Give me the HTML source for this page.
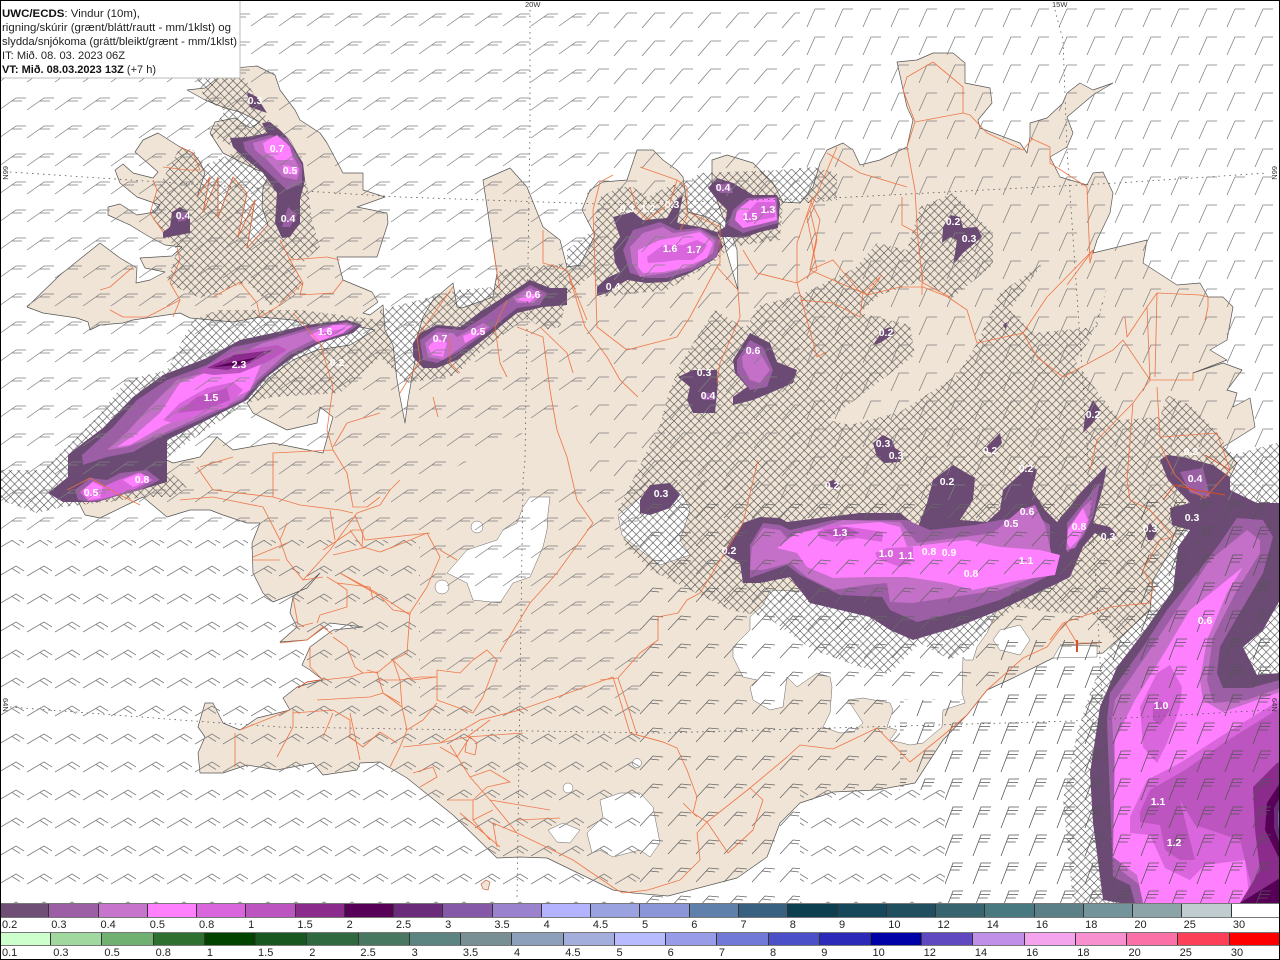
<!DOCTYPE html>
<html lang="is"><head><meta charset="utf-8"><title>UWC/ECDS</title>
<style>
html,body{margin:0;padding:0;background:#fff}
#w{position:relative;width:1280px;height:960px;overflow:hidden;background:#fff;font-family:"Liberation Sans",sans-serif}
svg{position:absolute;left:0;top:0}
.bar{position:absolute;left:0;width:1280px;display:flex;box-sizing:border-box;border-top:1px solid #777;border-bottom:1px solid #777}
.bar i{display:block;flex:1;border-right:1px solid #333;box-sizing:border-box}
.lab{position:absolute;left:0;width:1280px;display:flex;font-size:11px;line-height:14px;color:#222;background:#fff}
.lab b{display:block;flex:1;font-weight:400;padding-left:2px;box-sizing:border-box}
.edge{position:absolute;background:#000}
</style></head><body><div id="w">
<svg width="1280" height="903" viewBox="0 0 1280 903" xmlns="http://www.w3.org/2000/svg">
<defs>
<pattern id="h" width="8.4" height="8.4" patternUnits="userSpaceOnUse" x="2" y="1"><path d="M0 0L8.4 8.4M8.4 0L0 8.4M-1 7.4L1 9.4M7.4 -1L9.4 1" stroke="#3a3a3a" stroke-width=".55" fill="none"/></pattern>
<pattern id="b3" width="28" height="28" patternUnits="userSpaceOnUse" x="25" y="4"><path d="M2 22L19 10h10M15 13h10M-26 22L-9 10h10M-13 13h10" stroke="#808080" stroke-width=".75" fill="none"/></pattern>
<pattern id="b2" width="28" height="28" patternUnits="userSpaceOnUse" x="24" y="6"><path d="M2 22L15 7h10M-26 22L-13 7h10" stroke="#808080" stroke-width=".75" fill="none"/></pattern>
<pattern id="b1" width="28" height="28" patternUnits="userSpaceOnUse" x="21" y="1"><path d="M2 26L10 8h10" stroke="#808080" stroke-width=".75" fill="none"/></pattern>
<pattern id="bc" width="28" height="28" patternUnits="userSpaceOnUse" x="25" y="0"><path d="M2 16L19 6l8 5M15 8.500l8 5M-26 16L-9 6l8 5M-13 8.500l8 5" stroke="#808080" stroke-width=".75" fill="none"/></pattern>
<pattern id="b5" width="28" height="28" patternUnits="userSpaceOnUse" x="22" y="22"><path d="M2 20L15 6l10 1M12 9l9 1M-26 20L-13 6l10 1M-16 9l9 1" stroke="#666" stroke-width=".75" fill="none"/></pattern>
<pattern id="bs" width="28" height="28" patternUnits="userSpaceOnUse" x="19" y="20"><path d="M2 24L10 3h10M9 6.500h10M7.700 10h9" stroke="#555" stroke-width=".75" fill="none"/></pattern>
</defs>
<rect width="1280" height="903" fill="#fff"/>
<!-- land -->
<path fill="#f0e4d6" stroke="#555" stroke-width=".7" stroke-linejoin="round" d="M253 573L252 543L260 523L247 523L223 515L210 510L190 510L167 517L143 497L100 518L85 515L70 485L68 470L90 470L133 463L160 457L173 463L200 457L217 437L233 450L273 443L323 453L333 417L320 407L317 423L287 430L253 413L247 403L270 377L293 360L317 350L350 345L375 330L350 325L333 332L293 320L260 317L233 322L190 318L180 313L133 320L123 323L100 325L90 330L88 322L77 318L43 313L27 307L60 275L100 243L120 258L137 268L136 283L150 280L165 272L145 268L140 258L172 256L182 247L165 245L148 236L130 225L108 215L108 207L120 204L137 215L155 212L160 205L137 197L120 183L115 170L123 164L133 173L153 178L158 172L150 165L135 152L143 140L158 133L180 147L193 153L200 162L205 173L197 197L210 177L203 212L218 177L218 218L228 190L233 177L247 193L238 237L255 200L247 248L268 225L262 207L263 187L270 173L257 170L223 153L210 133L215 122L235 118L250 128L260 122L240 112L225 108L205 100L187 90L205 88L215 80L235 68L257 66L275 75L280 90L295 110L300 120L320 133L327 143L343 173L363 173L363 190L385 197L357 207L387 213L388 223L377 257L337 257L343 280L372 292L378 302L363 313L370 315L383 305L385 330L393 345L397 380L400 397L405 423L408 400L415 360L417 337L423 317L433 300L453 283L457 307L462 308L493 297L497 273L483 180L510 168L527 187L543 227L560 240L567 267L580 265L595 235L582 210L590 190L603 182L627 180L637 150L653 150L663 160L677 170L683 177L688 212L707 217L720 224L726 250L738 290L737 250L732 235L722 215L712 185L712 160L727 155L753 163L773 183L783 202L800 203L813 187L820 163L827 150L843 143L853 150L860 165L880 160L907 147L913 120L907 107L897 62L917 60L933 53L953 53L965 63L965 83L990 88L992 103L978 120L980 128L1020 143L1027 153L1030 137L1030 123L1047 118L1063 103L1067 93L1080 83L1093 90L1113 83L1093 95L1067 117L1073 133L1067 147L1050 157L1060 177L1087 185L1093 173L1103 172L1113 193L1110 213L1097 240L1093 253L1147 240L1143 263L1177 285L1200 283L1208 297L1223 297L1233 307L1227 340L1210 350L1227 360L1193 373L1223 363L1242 370L1227 390L1237 393L1233 407L1250 398L1255 427L1223 447L1237 463L1230 477L1203 500L1177 540L1153 580L1150 610L1103 653L1053 658L1013 678L987 690L967 715L943 740L915 783L877 790L833 792L800 803L780 823L767 857L737 878L668 896L633 893L613 890L547 858L520 857L497 858L453 815L407 778L380 762L360 763L357 770L323 775L313 763L277 770L247 765L223 773L200 773L198 753L205 737L198 727L205 703L213 703L223 723L240 730L257 718L290 710L283 698L297 687L323 680L310 670L302 665L310 647L333 630L363 627L330 623L307 640L280 642L297 627L290 613L293 597L320 573L307 588L273 602L263 593Z"/>
<path fill="#f0e4d6" stroke="#c0502a" stroke-width=".6" d="M481 884L486 880L490 882L488 890L483 889Z"/>
<!-- ice and lakes -->
<g fill="#fff" stroke="#666" stroke-width=".5">
<path d="M530 497L550 497L548 513L547 530L543 547L530 577L513 583L500 603L473 600L467 583L447 573L467 550L497 540L503 530L517 523L523 507Z"/>
<circle cx="477" cy="527" r="6"/><circle cx="442" cy="587" r="7"/><circle cx="637" cy="763" r="4.500"/><circle cx="568" cy="788" r="5"/>
<path d="M618 515L640 497L680 490L690 510L680 540L690 555L660 565L640 550L622 535Z"/>
<path d="M600 800L620 793L640 793L653 807L660 843L650 857L640 850L613 857L600 850L592 853L587 833L603 817Z"/>
<path d="M548 830L563 823L580 830L570 843L557 842Z"/>
<path d="M733 647L750 630L750 617L763 605L770 590L900 595L997 610L987 633L977 647L973 660L965 660L963 657L962 693L965 703L943 710L942 727L923 743L910 745L890 740L897 730L887 727L893 710L890 703L863 698L848 700L863 723L853 732L840 733L823 727L830 713L832 687L830 677L817 673L797 687L787 677L783 707L770 710L753 700L750 687L757 680L743 677L733 657Z"/>
<path d="M993 640L1000 630L1020 625L1030 640L1020 655L1000 650Z"/>
<path d="M1053 658L1060 646L1097 645L1097 657Z"/>
<path d="M270 125L290 140L303 165L300 172L285 155Z"/>
</g>
<!-- cross hatch -->
<g fill="url(#h)">
<path d="M197 78L245 78L265 115L300 160L308 190L312 220L320 247L303 262L290 258L303 285L290 300L270 305L247 282L200 298L167 283L177 250L150 215L157 190L180 147L193 150L205 165L240 150L210 135L225 110L205 100Z"/>
<path d="M0 470L43 470L97 417L127 380L167 370L193 320L217 310L300 310L380 320L380 357L340 393L273 397L247 403L187 443L160 463L187 487L173 497L147 497L63 507L37 513L0 500Z"/>
<path d="M380 310L458 290L493 287L500 270L567 263L567 250L593 230L600 197L620 187L633 187L647 197L667 187L690 180L700 173L780 170L813 167L837 173L837 200L813 203L783 203L780 240L730 247L717 260L667 290L600 297L593 273L567 297L560 327L543 330L527 317L487 347L467 363L457 375L407 383L380 357Z"/>
<path d="M618 510L640 465L660 425L668 395L680 365L695 340L715 310L745 328L760 305L800 295L855 268L877 243L907 250L920 207L953 193L993 233L993 265L950 300L925 280L880 295L860 313L910 325L915 355L855 400L828 420L850 425L900 412L957 375L977 343L1000 293L1043 263L1010 310L1033 333L1097 327L1107 287L1090 340L1075 360L1100 395L1120 420L1160 417L1167 395L1190 405L1215 430L1233 455L1280 442L1280 680L1135 680L1135 903L1073 903L1063 800L1077 733L1090 693L1103 660L1115 640L1095 615L1050 612L1017 607L993 623L973 647L950 660L920 643L890 673L860 667L813 650L767 617L730 610L680 585L650 570L625 545Z"/>
</g>
<!-- precipitation -->
<g stroke="none">
<!-- Breidafjordur -->
<path fill="#6b4a73" d="M68 455L83 443L103 428L133 397L163 375L207 358L240 340L273 333L307 325L347 320L362 325L353 333L320 343L293 357L267 377L247 400L207 420L167 440L167 470L167 482L140 490L120 495L97 502L63 502L48 493L68 477Z"/>
<path fill="#9c5ea4" d="M82 455L113 427L137 400L167 380L207 365L233 347L267 340L307 328L347 322L357 326L347 333L317 342L290 355L260 380L243 400L200 420L160 437L133 452L107 457L83 465Z"/>
<path fill="#c46fc8" d="M107 450L127 432L150 407L177 380L207 372L233 357L263 343L310 330L347 323L353 327L317 338L287 353L257 380L243 398L200 417L160 435L127 447Z"/>
<path fill="#ff80ff" d="M117 447L137 433L160 413L180 383L213 370L247 367L265 355L250 390L220 405L165 425L130 445Z"/>
<path fill="#d966dc" d="M163 420L180 403L207 388L233 382L243 390L227 407L200 415L173 423Z"/>
<path fill="#bc55bf" d="M177 413L197 397L227 388L230 400L203 410Z"/>
<path fill="#bc55bf" d="M197 372L233 352L277 345L287 350L267 362L240 373L213 375Z"/>
<path fill="#8b2c8c" d="M207 368L233 355L273 350L250 363L227 370Z"/>
<path fill="#570057" d="M213 367L233 362L258 357L240 365Z"/>
<path fill="#ff80ff" d="M310 335L333 325L353 325L343 333L317 342Z"/>
<path fill="#d966dc" d="M320 333L347 328L330 337Z"/>
<path fill="#9c5ea4" d="M75 490L90 478L107 480L120 473L147 470L160 480L140 490L113 497L93 502L78 500Z"/>
<path fill="#d966dc" d="M80 492L93 481L105 486L118 480L140 472L153 480L135 489L103 499L88 501Z"/>
<path fill="#ff80ff" d="M83 490L93 482L103 487L100 498L88 500Z"/>
<path fill="#ff80ff" d="M123 480L140 473L150 480L133 487Z"/>
<!-- NW fjords -->
<path fill="#6b4a73" d="M230 138L247 137L267 133L262 123L270 122L280 130L287 137L303 163L305 180L300 200L300 223L290 237L282 238L275 223L277 193L263 173L243 157L233 147Z"/>
<path fill="#9c5ea4" d="M243 142L270 135L287 138L302 165L302 183L287 190L273 177L257 162L245 150Z"/>
<path fill="#c46fc8" d="M253 143L273 137L287 143L300 170L297 180L283 177L267 160L255 150Z"/>
<path fill="#ff80ff" d="M263 143L277 135L290 147L293 160L277 160L265 152Z"/>
<path fill="#ff80ff" d="M283 165L298 168L297 175L285 173Z"/>
<path fill="#9c5ea4" d="M288 207L297 215L290 227L282 227Z"/>
<path fill="#6b4a73" d="M247 92L257 97L267 113L250 107Z"/>
<path fill="#6b4a73" d="M172 212L180 207L190 213L190 233L163 238L163 232L170 227Z"/>
<path fill="#9c5ea4" d="M177 213L187 212L186 220L178 222Z"/>
<!-- Huna -->
<path fill="#6b4a73" d="M413 343L420 333L437 325L460 327L480 312L510 293L530 280L550 288L567 288L567 305L543 307L517 313L487 337L457 360L437 368L423 368L413 357Z"/>
<path fill="#9c5ea4" d="M420 340L437 328L463 330L487 315L507 300L530 285L547 293L540 305L517 308L490 330L457 353L437 363L423 360Z"/>
<path fill="#c46fc8" d="M425 343L437 332L453 333L457 337L483 323L490 327L467 343L443 360L428 357Z"/>
<path fill="#c46fc8" d="M513 297L530 288L543 295L533 303L517 303Z"/>
<path fill="#ff80ff" d="M428 347L437 338L447 343L443 357L432 355Z"/>
<path fill="#ff80ff" d="M517 300L528 293L538 295L530 302Z"/>
<path fill="#ff80ff" d="M463 336L487 326L484 332L465 343Z"/>
<!-- Skagi -->
<path fill="#6b4a73" d="M597 287L607 278L620 272L615 263L613 247L620 237L613 217L633 212L643 220L667 218L677 200L683 195L677 223L700 227L717 232L723 247L713 260L690 273L667 282L647 283L627 280L607 293L597 296Z"/>
<path fill="#9c5ea4" d="M627 263L623 250L633 230L660 222L677 230L700 228L720 240L717 257L693 270L667 278L647 278L630 273Z"/>
<path fill="#c46fc8" d="M632 263L630 247L643 233L663 227L673 233L700 230L715 240L713 253L693 267L667 273L640 277Z"/>
<path fill="#ff80ff" d="M638 267L638 250L660 240L677 237L700 232L713 243L707 258L683 268L663 272L643 273Z"/>
<path fill="#d966dc" d="M647 257L663 245L683 245L697 240L707 245L703 252L693 260L677 260L663 262L648 263Z"/>
<!-- Eyjafjordur -->
<path fill="#6b4a73" d="M708 188L717 178L733 183L753 195L777 195L780 203L778 228L760 232L743 238L733 237L720 237L717 232L725 227L727 210L717 200Z"/>
<path fill="#9c5ea4" d="M733 210L747 198L777 197L778 223L760 228L743 233L728 225Z"/>
<path fill="#ff80ff" d="M737 210L750 200L775 198L777 220L757 225L743 228L735 220Z"/>
<path fill="#d966dc" d="M743 217L757 202L775 202L775 217L760 220L747 223Z"/>
<path fill="#9c5ea4" d="M715 185L730 183L733 193L720 193Z"/>
<!-- inland cells -->
<path fill="#6b4a73" d="M733 360L750 333L770 343L777 362L797 370L793 383L777 390L753 400L733 405L733 397L747 387L735 373Z"/>
<path fill="#9c5ea4" d="M737 360L750 340L763 347L773 370L767 387L750 390L737 373Z"/>
<path fill="#c46fc8" d="M742 357L750 347L760 353L770 370L760 383L750 380L743 367Z"/>
<path fill="#6b4a73" d="M678 377L693 370L717 370L718 383L715 413L693 413L687 400L690 387Z"/>
<path fill="#9c5ea4" d="M702 393L715 393L715 400L703 400Z"/>
<path fill="#6b4a73" d="M943 227L950 215L960 217L963 228L977 227L982 237L963 253L953 265L955 253L957 240L950 237L942 243Z"/>
<path fill="#6b4a73" d="M1093 400L1100 410L1093 423L1083 433L1085 417Z"/>
<path fill="#6b4a73" d="M873 443L883 435L892 440L895 448L903 453L900 462L885 463L877 457Z"/>
<path fill="#6b4a73" d="M883 330L890 327L895 333L880 343L873 345Z"/>
<path fill="#6b4a73" d="M1003 325L1007 322L1006 330Z"/>
<path fill="#6b4a73" d="M983 450L1000 433L1002 443L993 453Z"/>
<path fill="#6b4a73" d="M825 483L833 480L840 485L835 490Z"/>
<path fill="#6b4a73" d="M640 500L650 485L670 483L680 495L670 508L650 515L640 513Z"/>
<path fill="#6b4a73" d="M1145 530L1150 523L1157 532L1152 540L1148 540Z"/>
<!-- Band -->
<path fill="#6b4a73" d="M723 553L743 523L760 517L780 518L787 522L860 513L900 513L918 527L927 503L933 480L953 465L975 478L973 500L960 520L987 522L1000 510L1003 490L1030 465L1037 470L1032 490L1045 510L1057 522L1067 510L1083 490L1107 465L1103 487L1093 523L1110 527L1117 535L1107 540L1095 533L1083 547L1070 577L1050 587L1000 610L957 627L913 640L890 630L870 617L810 603L790 577L760 583L743 583L740 563Z"/>
<path fill="#9c5ea4" d="M750 545L763 523L780 525L790 530L833 520L907 520L930 530L975 525L1000 520L1035 515L1050 525L1050 575L1000 600L967 610L917 622L890 610L882 597L840 595L800 575L787 565L750 578Z"/>
<path fill="#c46fc8" d="M752 545L763 528L780 530L787 538L843 520L900 522L917 543L993 533L1020 510L1035 505L1045 525L1055 570L1000 590L953 597L913 603L890 602L887 583L867 585L833 590L807 577L790 563L763 570L750 570Z"/>
<path fill="#ff80ff" d="M777 548L797 533L843 525L880 522L900 527L907 547L967 540L1000 547L1040 550L1060 555L1055 575L1020 580L973 590L947 583L907 577L890 577L867 577L833 578L807 567L797 553Z"/>
<path fill="#d966dc" d="M817 532L830 525L857 528L883 532L882 542L857 538L833 542L820 538Z"/>
<path fill="#bc55bf" d="M823 530L847 527L860 533L837 538Z"/>
<path fill="#d966dc" d="M875 553L887 548L913 547L913 560L900 567L877 558Z"/>
<path fill="#9c5ea4" d="M1067 523L1083 503L1100 482L1093 517L1083 537L1067 553Z"/>
<path fill="#c46fc8" d="M1068 528L1084 506L1092 500L1088 525L1075 548L1066 550Z"/>
<path fill="#ff80ff" d="M1067 543L1068 530L1083 508L1088 520L1078 540L1070 548Z"/>
<!-- SE -->
<path fill="#6b4a73" d="M1160 460L1167 455L1183 457L1213 465L1230 477L1230 490L1257 503L1280 503L1280 600L1263 630L1243 647L1257 675L1280 673L1280 903L1120 903L1103 900L1093 823L1090 773L1100 707L1117 667L1143 633L1173 590L1178 547L1190 530L1172 525L1170 508L1190 503L1168 480Z"/>
<path fill="#9c5ea4" d="M1180 472L1203 468L1210 497L1190 493Z"/>
<path fill="#9c5ea4" d="M1237 518L1263 520L1273 537L1263 573L1228 633L1220 647L1217 673L1223 688L1250 688L1280 680L1280 903L1135 903L1130 885L1113 877L1107 720L1110 693L1143 647L1167 610L1197 573L1220 543Z"/>
<path fill="#c46fc8" d="M1247 530L1260 540L1260 553L1237 590L1213 637L1207 680L1213 703L1247 700L1280 688L1280 903L1150 903L1140 885L1120 870L1117 800L1112 720L1115 700L1150 650L1180 605L1210 560Z"/>
<path fill="#ff80ff" d="M1243 567L1227 593L1207 640L1200 680L1203 700L1223 712L1257 700L1280 692L1280 903L1143 903L1137 875L1113 857L1115 740L1135 700L1160 660L1190 610Z"/>
<path fill="#d966dc" d="M1130 817L1147 780L1180 763L1223 735L1280 700L1280 903L1250 903L1245 860L1205 865L1190 880L1165 868L1150 835L1130 833Z"/>
<path fill="#bc55bf" d="M1140 812L1150 790L1185 770L1225 742L1280 708L1280 890L1255 900L1240 840L1195 825L1180 800L1190 840L1195 860L1180 860L1165 850L1160 825L1140 822Z"/>
<path fill="#d966dc" d="M1140 707L1157 673L1170 665L1182 687L1180 707L1167 743L1157 763L1143 747Z"/>
<path fill="#bc55bf" d="M1153 707L1160 700L1170 710L1160 725L1153 720Z"/>
<path fill="#8b2c8c" d="M1253 787L1277 763L1280 762L1280 903L1240 903L1260 870L1255 830Z"/>
<path fill="#570057" d="M1267 803L1280 783L1280 860L1265 830Z"/>
<path fill="#6a2b7a" d="M1274 808L1280 797L1280 845L1274 828Z"/>
<path fill="#8558a8" d="M1278 812L1280 808L1280 835L1278 825Z"/>
<path fill="#570057" d="M1240 903L1280 878L1280 903Z"/>
</g>
<!-- graticule -->
<g fill="none" stroke="#555" stroke-width=".8" stroke-dasharray="1.500 4">
<path d="M10 172L160 182L400 197L600 204L833 198L1117 183L1267 173"/>
<path d="M10 707L180 720L280 727L660 733L1073 721L1270 710"/>
<path d="M530 10L530 130L525 460L523 480L517 897"/>
<path d="M1055 10L1063 40L1067 150L1083 383L1097 600L1103 720L1115 887"/>
</g>
<!-- barbs -->
<g>
<path fill="url(#b3)" d="M0 0H590V400L430 480H0Z"/>
<path fill="url(#b3)" d="M0 480H420V540H0Z"/>
<path fill="url(#b2)" d="M590 0H800V480H590V400Z"/>
<path fill="url(#b3)" d="M420 480H640V700H420Z"/>
<path fill="url(#b1)" d="M800 0H1280V500H1135V500H760V480H800Z"/>
<path fill="url(#bc)" d="M0 540H420V903H0Z"/>
<path fill="url(#bc)" d="M420 700H640V903H420Z"/>
<path fill="url(#b5)" d="M640 480H760V500H1135V640H1000V650H800V790H800V903H640Z"/>
<path fill="url(#b5)" d="M800 650H1000V700H900V790H800Z"/>
<path fill="url(#bc)" d="M800 790H945V903H800Z"/>
<path fill="url(#bs)" d="M1000 640H1280V903H945V790H900V700H1000Z"/>
<path fill="url(#bs)" d="M1135 500H1280V640H1135Z"/>
</g>
<!-- roads -->
<g fill="none" stroke="#ee7040" stroke-width=".85" stroke-linejoin="round" opacity=".92">
<path d="M517 833L573 860L617 890L623 893L648 890L680 880L700 860L697 833L707 822L750 788L787 757L800 745L833 749L877 728L910 762L940 738L967 715L987 690L1023 658L1047 647L1065 623L1077 643L1100 643"/>
<path d="M1050 640L1063 623L1110 607L1150 603L1153 587L1143 570L1160 540L1173 537L1150 510L1130 500L1127 480L1130 440"/>
<path d="M1150 380L1123 340L1113 350L1063 377L1037 357L1023 333L977 343L967 310L948 297L923 287L900 287L867 295L858 290L833 260L810 270L820 220L810 200"/>
<path d="M1023 333L1047 297L1093 250L1090 263L1087 187L1050 163L1050 147L1030 138"/>
<path d="M1093 250L1067 285"/>
<path d="M1150 380L1147 307L1157 293L1200 295L1208 297L1208 307L1205 320M1147 307L1127 337L1125 317M1157 293L1155 377"/>
<path d="M1150 380L1193 380L1193 372M1157 387L1160 437L1217 433L1230 470L1205 498L1190 490L1175 475L1160 445"/>
<path d="M1150 380L1133 403L1097 440L1090 470M1133 403L1130 440"/>
<path d="M907 147L915 122L963 113L963 87L933 62L907 77L903 90L915 122M963 113L970 115L987 133L1023 150L1033 138"/>
<path d="M907 147L915 190L918 240L923 283L950 297M902 197L902 225L917 233M827 153L860 173L907 187"/>
<path d="M810 210L817 240L810 270L863 293L860 317L833 303L800 300"/>
<path d="M922 272L922 295M867 295L880 278M863 293L882 275"/>
<path d="M593 210L597 327L627 350L677 337L690 317L717 267L738 290L740 317L720 363L717 383"/>
<path d="M743 250L757 273L797 283L817 270L807 217L837 147M797 283L797 243L813 197M797 283L817 357L826 352"/>
<path d="M400 393L420 360L417 337L453 287M433 397L438 417M450 337L450 363L460 373"/>
<path d="M507 300L495 327L500 363L507 377M517 327L543 337L550 390L557 430L567 457M567 270L585 327L607 357L620 380L638 397"/>
<path d="M540 327L567 353L573 373M568 273L587 320M493 247L497 273L500 290M543 230L543 263L567 270"/>
<path d="M630 187L637 210L647 220L670 203L677 180L687 187L687 217L680 230M640 167L677 180M690 213L720 227L720 263L717 267"/>
<path d="M613 175L600 182L593 210"/>
<path d="M180 500L213 497L263 507L280 540L287 560L303 580L330 550L357 513L380 505L390 490L400 480M253 557L287 543M287 523L280 540M303 580L323 577"/>
<path d="M363 547L380 552L403 543L427 533L440 557L427 587L410 613L407 653L393 660L377 673L367 670M410 613L393 610L377 593L340 573M440 550L457 560M323 550L353 530L363 530L362 547"/>
<path d="M252 560L280 560M327 577L337 583L370 587L373 600M337 583L347 590L347 607L320 615L317 623M340 573L357 583L390 602L410 615M293 597L298 625M313 623L297 627"/>
<path d="M280 643L307 640L323 627L332 634M310 647L310 667L323 680L350 677L363 673L355 667L347 647L333 637M363 673L377 672L383 693L400 703M377 680L400 680L420 677L437 677"/>
<path d="M393 660L400 680L402 707L407 730L400 747L390 767M317 700L370 697L383 693L402 707M350 713L360 760M277 757L293 727L293 710M235 733L235 767M240 730L290 710M333 713L323 737M293 713L333 710L350 720L350 737L363 747L380 732L397 743M407 730L423 720L437 703"/>
<path d="M403 747L440 743L480 720L520 710L557 697L613 677L630 733L663 742M523 733L467 737L440 743M490 720L467 737M440 747L457 757L470 737L477 743L475 755L465 752L467 740"/>
<path d="M450 745L470 777L490 800L517 833M490 800L550 810M517 820L560 818M460 813L500 847M413 773L433 767L437 777L420 787M470 777L490 770L510 782L487 787L473 800L447 800M473 800L473 820L490 840M473 820L493 810M517 833L493 823L497 847"/>
<path d="M437 670L460 673L473 660L487 650L497 660L483 697L473 713L437 700L437 670M437 677L413 680L393 660"/>
<path d="M500 652L530 603L557 573L593 523L577 500L567 457"/>
<path d="M600 680L618 678L630 713L637 735L663 742L677 748L687 770L697 797L693 813L707 822M618 678L640 653L658 640L658 617L678 613L687 600L700 593L743 523L758 460"/>
<path d="M750 788L763 800L753 830L728 853L707 822M683 803L697 817"/>
<path d="M350 530L363 548L333 555M330 510L335 540M355 515L365 540L430 533"/>
<!-- westfjords -->
<path d="M180 147L193 153L200 170L187 170L163 167M153 180L157 190L150 213L163 232"/>
<path d="M197 197L210 177L203 212L218 177L218 218L228 190L233 177L247 193L238 237L255 200L247 248L268 225"/>
<path d="M177 247L180 260L170 283L180 300L173 317M213 297L240 282L257 303L260 317L277 307L303 283L290 260L280 240M290 260L327 257L340 260M303 283L300 295L333 293L343 280M110 310L123 317L147 317L180 300M133 267L110 287L100 290"/>
<!-- snaefellsnes / dalir -->
<path d="M197 467L213 490L273 497L273 467L273 453L333 450L347 473L353 507L367 507L380 497M333 447L347 423L380 413M293 313L320 343L333 387L327 430L333 450M200 467L233 457M67 490L90 478L120 495L140 505M353 513L340 510L300 505L273 497"/>
</g>
<g fill="none" stroke="#d2502a" stroke-width="1"><path d="M298 688L307 682L320 680M1163 500L1175 485L1195 490L1225 495M1205 455L1230 470"/></g>
<path d="M1060 645L1097 643" fill="none" stroke="#444" stroke-width=".6"/>
<path d="M1077 640L1077 652" stroke="#d2502a" stroke-width="2"/>
<!-- value labels -->
<g fill="#fff" font-family="Liberation Sans,sans-serif" font-size="10.500" font-weight="700" text-anchor="middle">
<text x="277" y="152">0.7</text><text x="290" y="174">0.5</text><text x="288" y="222">0.4</text><text x="183" y="219">0.4</text><text x="255" y="104">0.3</text>
<text x="440" y="342">0.7</text><text x="478" y="335">0.5</text><text x="533" y="298">0.6</text><text x="670" y="252">1.6</text><text x="694" y="253">1.7</text>
<text x="723" y="191">0.4</text><text x="768" y="213">1.3</text><text x="750" y="220">1.5</text><text x="613" y="290">0.4</text><text x="627" y="212">0.3</text><text x="648" y="212">1.2</text><text x="672" y="208">0.3</text>
<text x="325" y="335">1.6</text><text x="239" y="368">2.3</text><text x="211" y="401">1.5</text><text x="142" y="483">0.8</text><text x="91" y="496">0.5</text><text x="337" y="366">0.2</text>
<text x="753" y="354">0.6</text><text x="704" y="376">0.3</text><text x="708" y="399">0.4</text><text x="953" y="225">0.2</text><text x="969" y="242">0.3</text><text x="886" y="336">0.2</text>
<text x="1093" y="418">0.2</text><text x="883" y="447">0.3</text><text x="896" y="459">0.3</text><text x="1026" y="472">0.2</text><text x="947" y="485">0.2</text><text x="661" y="497">0.3</text><text x="832" y="489">0.2</text><text x="990" y="454">0.2</text>
<text x="729" y="554">0.2</text><text x="840" y="536">1.3</text><text x="886" y="557">1.0</text><text x="906" y="559">1.1</text><text x="929" y="555">0.8</text><text x="949" y="556">0.9</text><text x="971" y="577">0.8</text>
<text x="1011" y="527">0.5</text><text x="1027" y="515">0.6</text><text x="1079" y="530">0.8</text><text x="1026" y="564">1.1</text><text x="1108" y="540">0.3</text><text x="1150" y="532">0.3</text>
<text x="1191" y="455">0.3</text><text x="1195" y="482">0.4</text><text x="1192" y="521">0.3</text><text x="1205" y="624">0.6</text><text x="1161" y="709">1.0</text><text x="1158" y="805">1.1</text><text x="1174" y="846">1.2</text>
</g>
<!-- coordinate labels -->
<g fill="#333" font-family="Liberation Sans,sans-serif" font-size="7.500">
<text x="525" y="7">20W</text><text x="1052" y="7">15W</text>
<text transform="translate(3,166) rotate(90)">66N</text><text transform="translate(1272,166) rotate(90)">66N</text>
<text transform="translate(3,698) rotate(90)">64N</text><text transform="translate(1272,698) rotate(90)">64N</text>
</g>
<!-- info box -->
<rect x="-1" y="-1" width="241" height="79" fill="#fff" stroke="#bbb" stroke-width="1"/>
<g fill="#222" font-family="Liberation Sans,sans-serif" font-size="11">
<text x="2" y="17" textLength="138" lengthAdjust="spacingAndGlyphs"><tspan font-weight="700" fill="#111">UWC/ECDS</tspan>: Vindur (10m),</text>
<text x="2" y="31" textLength="229" lengthAdjust="spacingAndGlyphs">rigning/skúrir (grænt/blátt/rautt - mm/1klst) og</text>
<text x="2" y="45" textLength="235" lengthAdjust="spacingAndGlyphs">slydda/snjókoma (grátt/bleikt/grænt - mm/1klst)</text>
<text x="2" y="59" textLength="123" lengthAdjust="spacingAndGlyphs">IT: Mið. 08. 03. 2023 06Z</text>
<text x="2" y="73" textLength="154" lengthAdjust="spacingAndGlyphs"><tspan font-weight="700" fill="#111">VT: Mið. 08.03.2023 13Z</tspan> (+7 h)</text>
</g>
</svg>
<!-- legends -->
<div class="bar" style="top:903px;height:15px">
<i style="background:#6f4f76"></i><i style="background:#9c5ea4"></i><i style="background:#c674cc"></i><i style="background:#ff80ff"></i><i style="background:#d966dc"></i><i style="background:#bc55bf"></i><i style="background:#8b2c8c"></i><i style="background:#570057"></i><i style="background:#6a2b7a"></i><i style="background:#8558a8"></i><i style="background:#9b82cf"></i><i style="background:#b3b3ff"></i><i style="background:#9aa2e0"></i><i style="background:#8a96d8"></i><i style="background:#6080ac"></i><i style="background:#386080"></i><i style="background:#0c4050"></i><i style="background:#14485a"></i><i style="background:#205060"></i><i style="background:#386470"></i><i style="background:#487880"></i><i style="background:#5c8088"></i><i style="background:#74949c"></i><i style="background:#8ca4a8"></i><i style="background:#c0ccd0"></i><i style="background:#fff;border-right:0"></i>
</div>
<div class="lab" style="top:918px;height:14px"><b>0.2</b><b>0.3</b><b>0.4</b><b>0.5</b><b>0.8</b><b>1</b><b>1.5</b><b>2</b><b>2.5</b><b>3</b><b>3.5</b><b>4</b><b>4.5</b><b>5</b><b>6</b><b>7</b><b>8</b><b>9</b><b>10</b><b>12</b><b>14</b><b>16</b><b>18</b><b>20</b><b>25</b><b>30</b></div>
<div class="bar" style="top:932px;height:14px">
<i style="background:#ccffcc"></i><i style="background:#a0d8a0"></i><i style="background:#70b070"></i><i style="background:#2e7030"></i><i style="background:#004400"></i><i style="background:#185820"></i><i style="background:#306840"></i><i style="background:#487860"></i><i style="background:#5c8480"></i><i style="background:#789094"></i><i style="background:#8ca0bc"></i><i style="background:#a4aedc"></i><i style="background:#b8bcff"></i><i style="background:#989ce8"></i><i style="background:#7078d8"></i><i style="background:#4c50c8"></i><i style="background:#2c28b8"></i><i style="background:#0000a8"></i><i style="background:#6048c0"></i><i style="background:#c090e8"></i><i style="background:#f4a4ec"></i><i style="background:#f890d0"></i><i style="background:#fc70a8"></i><i style="background:#fc4058"></i><i style="background:#ff0000;border-right:0"></i>
</div>
<div class="lab" style="top:946px;height:13px"><b>0.1</b><b>0.3</b><b>0.5</b><b>0.8</b><b>1</b><b>1.5</b><b>2</b><b>2.5</b><b>3</b><b>3.5</b><b>4</b><b>4.5</b><b>5</b><b>6</b><b>7</b><b>8</b><b>9</b><b>10</b><b>12</b><b>14</b><b>16</b><b>18</b><b>20</b><b>25</b><b>30</b></div>
<div class="edge" style="left:0;top:0;width:1280px;height:1px"></div>
<div class="edge" style="left:0;top:959px;width:1280px;height:1px"></div>
<div class="edge" style="left:0;top:0;width:1px;height:960px"></div>
<div class="edge" style="left:1279px;top:0;width:1px;height:960px"></div>
</div></body></html>
